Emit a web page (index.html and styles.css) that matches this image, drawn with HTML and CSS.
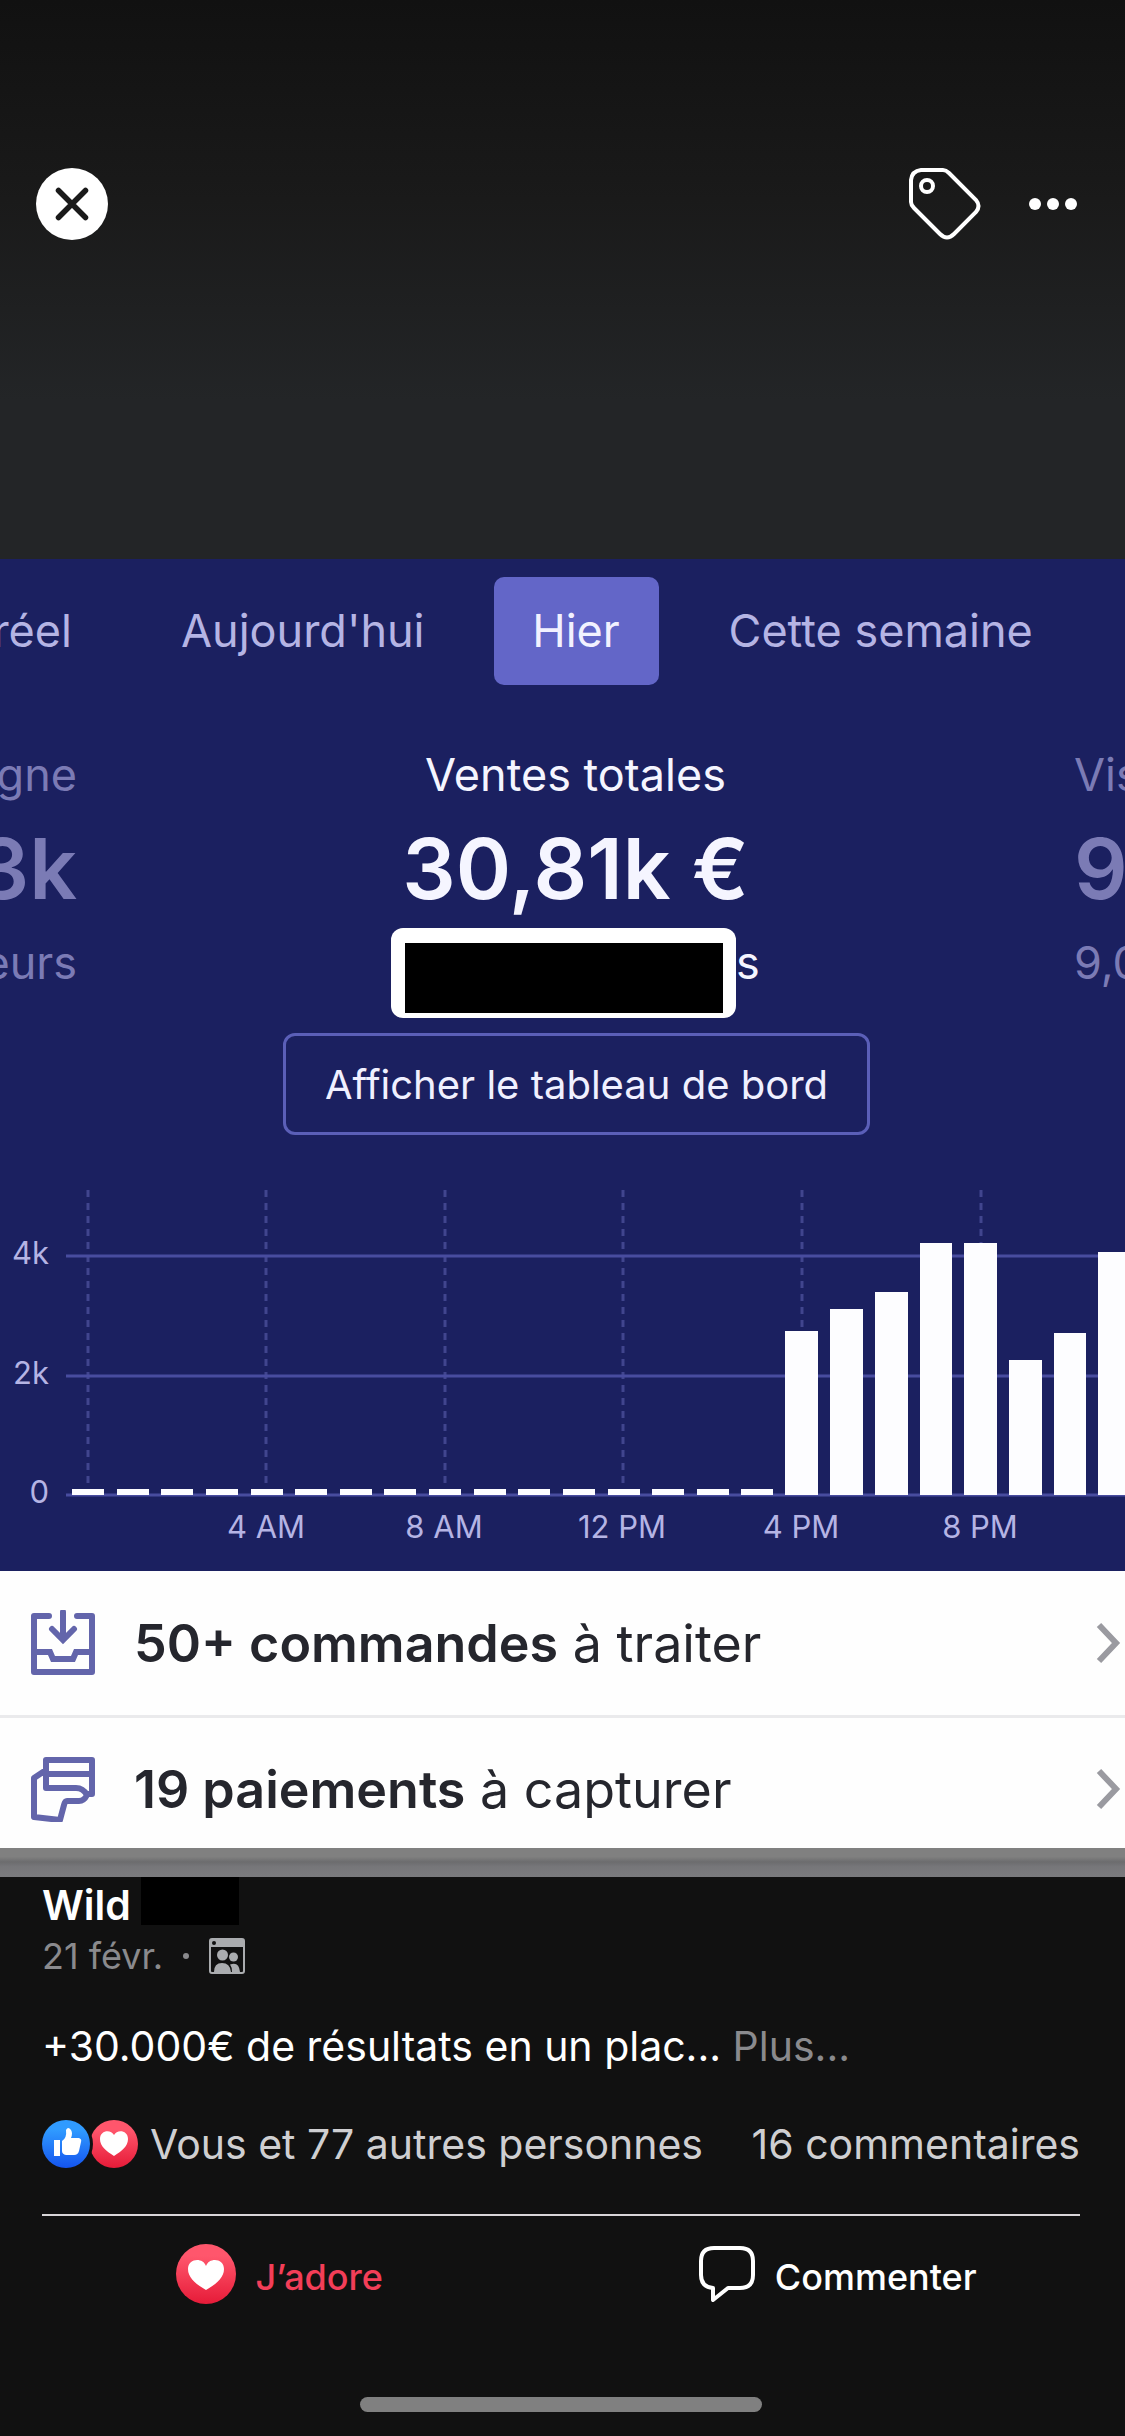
FILE: index.html
```html
<!DOCTYPE html>
<html lang="fr">
<head>
<meta charset="utf-8">
<meta name="viewport" content="width=device-width, initial-scale=1">
<title>Photo</title>
<link rel="stylesheet" href="styles.css">
</head>
<body>
<div class="viewer">
  <header class="topbar">
    <button class="icon-btn" type="button" aria-label="Fermer">
      <svg width="72" height="72" viewBox="0 0 72 72"><circle cx="36" cy="36" r="36" fill="#fff"/><path d="M22.500 22.500 49.500 49.500M49.500 22.500 22.500 49.500" stroke="#1a1a1a" stroke-width="5.500" stroke-linecap="round"/></svg>
    </button>
    <div class="tools">
      <button class="icon-btn" type="button" aria-label="Identifier">
        <svg width="72" height="72" viewBox="0 0 72 72" fill="none" stroke="#fff" stroke-width="4"><path d="M12 2H34Q37 2 40 5L67 32Q72 38 67 44L45 66Q38 73 31 66L5 40Q2 37 2 34V12Q3 3 12 2Z"/><circle cx="18" cy="18" r="6"/></svg>
      </button>
      <button class="icon-btn" type="button" aria-label="Plus d’options">
        <svg width="48" height="72" viewBox="0 0 48 72" fill="#fff"><circle cx="6" cy="36" r="6"/><circle cx="24" cy="36" r="6"/><circle cx="42" cy="36" r="6"/></svg>
      </button>
    </div>
  </header>

  <main class="photo">
    <section class="dashboard">
      <nav class="tabs">
        <button class="tab tab-first" type="button">réel</button>
        <button class="tab tab-today" type="button">Aujourd'hui</button>
        <button class="tab tab-active" type="button">Hier</button>
        <button class="tab tab-week" type="button">Cette semaine</button>
      </nav>
      <div class="metrics">
        <div class="metric metric-prev"><p>gne</p><strong>3k</strong><p>eurs</p></div>
        <div class="metric metric-main">
          <p>Ventes totales</p><strong>30,81k €</strong>
          <p class="hidden-line"><span class="mask"><span class="mask-ink"></span></span>s</p>
        </div>
        <div class="metric metric-next"><p>Vis</p><strong>9</strong><p>9,0</p></div>
      </div>
      <button class="board-btn" type="button">Afficher le tableau de bord</button>
      <svg class="chart" width="100%" height="381" role="img" aria-label="Ventes par heure">
        <g class="guides"><path d="M88 0V302M266 0V302M445 0V302M623 0V302M802 0V302M981 0V302"/></g>
        <g class="grid"><path d="M66 66H4000M66 186H4000M66 305H4000"/></g>
        <g class="bars">
          <path d="M72 299h32v6h-32zM117 299h32v6h-32zM161 299h32v6h-32zM206 299h32v6h-32zM251 299h32v6h-32zM295 299h32v6h-32zM340 299h32v6h-32zM384 299h32v6h-32zM429 299h32v6h-32zM474 299h32v6h-32zM518 299h32v6h-32zM563 299h32v6h-32zM608 299h32v6h-32zM652 299h32v6h-32zM697 299h32v6h-32zM741 299h32v6h-32z"/>
          <path d="M785 141h33v164h-33zM830 119h33v186h-33zM875 102h33v203h-33zM920 53h32v252h-32zM964 53h33v252h-33zM1009 170h33v135h-33zM1054 143h32v162h-32zM1098 62h33v243h-33z"/>
        </g>
        <g class="axis" text-anchor="end"><text x="49" y="74">4k</text><text x="49" y="194">2k</text><text x="49" y="313">0</text></g>
        <g class="axis" text-anchor="middle"><text x="266" y="348">4 AM</text><text x="444" y="348">8 AM</text><text x="622" y="348">12 PM</text><text x="801" y="348">4 PM</text><text x="980" y="348">8 PM</text></g>
      </svg>
    </section>

    <a class="task" href="#commandes">
      <svg width="66" height="66" viewBox="0 0 66 66" fill="none" stroke="#6365ab" stroke-width="6"><path d="M19 6H4V62H62V6H47" stroke-linejoin="round" stroke-linecap="round"/><path d="M4 42H20L23 49H43L46 42H62"/><path d="M33 2V29M22 19 33 30 44 19" stroke-linecap="round"/></svg>
      <span><b>50+ commandes</b> à traiter</span>
      <svg class="chevron" width="26" height="44" viewBox="0 0 26 44"><path d="M4 4 21 22 4 40"/></svg>
    </a>
    <a class="task" href="#paiements">
      <svg width="66" height="66" viewBox="0 0 66 66" fill="none" stroke="#6365ab" stroke-width="6" stroke-linejoin="round"><path d="M55 38H62V4H16V32H46Q53 32 57 39Q54 45 49 45H37Q35 45 34 49L30 64 4 61V22L16 14"/><path d="M16 18H62"/></svg>
      <span><b>19 paiements</b> à capturer</span>
      <svg class="chevron" width="26" height="44" viewBox="0 0 26 44"><path d="M4 4 21 22 4 40"/></svg>
    </a>
    <div class="photo-edge"></div>
  </main>

  <footer class="post">
    <h1 class="author">Wild <span class="author-mask"></span></h1>
    <p class="meta"><span>21 févr.</span><span class="dot"></span>
      <svg width="36" height="36" viewBox="0 0 36 36"><rect x="1" y="1" width="34" height="34" rx="2" fill="none" stroke="#aaacaf" stroke-width="2"/><path d="M1 1h34v8H1z" fill="#aaacaf"/><circle cx="5" cy="5" r="2" fill="#111"/><g fill="#aaacaf"><circle cx="13.500" cy="17" r="5.500"/><circle cx="24.500" cy="19" r="4.500"/><path d="M5 34Q5 25 13 25Q21 25 22 34ZM23 34Q23 29 21 26.500Q30 23 31 34Z"/></g></svg>
    </p>
    <p class="caption">+30.000€ de résultats en un plac... <a href="#plus">Plus...</a></p>
    <div class="stats">
      <svg width="96" height="48" viewBox="0 0 96 48">
        <defs>
          <linearGradient id="blue" x2="0" y2="1"><stop offset=".2" stop-color="#309bff"/><stop offset="1" stop-color="#1454ee"/></linearGradient>
          <linearGradient id="red" x2="0" y2="1"><stop offset=".2" stop-color="#ff566c"/><stop offset="1" stop-color="#e61b38"/></linearGradient>
        </defs>
        <circle cx="72" cy="24" r="24" fill="url(#red)"/>
        <path d="M72 36C64 31 58 26 58 19C58 10 69 9 72 15C75 9 86 10 86 19C86 26 80 31 72 36Z" fill="#fff"/>
        <circle cx="24" cy="24" r="27" fill="#111"/><circle cx="24" cy="24" r="24" fill="url(#blue)"/>
        <path d="M12 20h6v16h-6zM20 21Q25 18 24 10Q26 6 29 10Q31 13 29 18H37Q40 19 39 22L37 31Q36 35 32 35H24Q20 34 20 31Z" fill="#fff"/>
      </svg>
      <span class="likes">Vous et 77 autres personnes</span>
      <a class="comments" href="#commentaires">16 commentaires</a>
    </div>
    <hr class="rule">
    <div class="actions">
      <button class="action action-love" type="button">
        <svg width="60" height="60" viewBox="0 0 60 60"><circle cx="30" cy="30" r="30" fill="url(#red)"/><path d="M30 46C20 40 12 34 12 25C12 14 27 13 30 22C33 13 48 14 48 25C48 34 40 40 30 46Z" fill="#fff"/></svg>
        <span>J’adore</span>
      </button>
      <button class="action action-comment" type="button">
        <svg width="56" height="56" viewBox="0 0 56 56" fill="none" stroke="#fff" stroke-width="4" stroke-linejoin="round"><path d="M15 2H41Q54 2 54 15V29Q54 42 41 42H29L14 54V42Q2 41 2 29V15Q2 2 15 2Z"/></svg>
        <span>Commenter</span>
      </button>
    </div>
    <div class="home-bar"></div>
  </footer>
</div>
</body>
</html>
```
FILE: styles.css
```css
* { box-sizing: border-box; }

body {
  margin: 0;
  background: #111;
  color: #fff;
  font-family: Inter, "Liberation Sans", sans-serif;
}

button {
  margin: 0;
  padding: 0;
  border: 0;
  background: none;
  color: inherit;
  font: inherit;
}

a { color: inherit; text-decoration: none; }
p, h1 { margin: 0; }
svg { display: block; flex: none; }

.viewer {
  min-height: 100vh;
  display: flex;
  flex-direction: column;
  overflow: hidden;
}

.topbar {
  height: 559px;
  padding: 168px 48px 0 36px;
  display: flex;
  align-items: flex-start;
  justify-content: space-between;
  background: linear-gradient(#111 0, #1a1a1a 200px, #232527 400px);
}
.tools { display: flex; gap: 48px; }

.dashboard {
  background: #1b2060;
  display: flex;
  flex-direction: column;
  align-items: center;
}

.tabs {
  align-self: stretch;
  height: 126px;
  padding-top: 18px;
  display: flex;
  color: #b5b4e4;
  font-size: 45px;
  line-height: 108px;
  white-space: nowrap;
}
.tab-first { width: 72px; display: flex; justify-content: flex-end; }
.tab-today { margin-left: 109px; }
.tab-active {
  width: 165px;
  margin-left: 69px;
  border-radius: 10px;
  background: #6366c8;
  color: #f2f1ff;
}
.tab-week { margin-left: 70px; }

.metrics {
  align-self: stretch;
  padding-top: 62px;
  display: grid;
  grid-template-columns: 77px 1fr 51px;
  white-space: nowrap;
}
.metric {
  display: flex;
  flex-direction: column;
  color: #7b7bb5;
  font-size: 45px;
  line-height: 56px;
}
.metric strong { font-size: 84px; font-weight: 600; line-height: 132px; }
.metric-prev { align-items: flex-end; }
.metric-main { align-items: center; color: #f5f5ff; }
.hidden-line { display: flex; height: 90px; }
.mask {
  width: 345px;
  height: 90px;
  margin-top: -7px;
  padding: 15px 13px 5px 14px;
  border-radius: 12px;
  background: #fff;
}
.mask-ink { display: block; height: 100%; background: #000; }

.board-btn {
  width: 587px;
  height: 102px;
  margin: 8px 0 55px 28px;
  border: 3px solid #5b5fb8;
  border-radius: 12px;
  color: #f0f0ff;
  font-size: 40px;
}

.chart { height: 381px; }
.guides { stroke: #41458e; stroke-width: 3; stroke-dasharray: 7 6; }
.grid { stroke: #484c9f; stroke-width: 3; }
.bars { fill: #fdfdff; }
.axis { fill: #b5b4e4; font-size: 31px; }

.task {
  height: 144px;
  padding: 0 4px 0 30px;
  display: flex;
  align-items: center;
  gap: 38px;
  background: #fefefe;
  color: #25262d;
  font-size: 52px;
  white-space: nowrap;
}
.task + .task { height: 133px; padding-top: 12px; border-top: 3px solid #eaeaec; }
.task b { font-weight: 600; }
.chevron { margin-left: auto; fill: none; stroke: #9a9aa0; stroke-width: 6; }

.photo-edge {
  height: 29px;
  background: linear-gradient(#808080 30%, #6c6c6e 48%, #77777a 65%, #7b7b7e);
}

.post {
  padding: 0 45px 0 42px;
  flex: 1;
  display: flex;
  flex-direction: column;
}
.author {
  height: 56px;
  display: flex;
  gap: 10px;
  font-size: 41px;
  font-weight: 600;
  line-height: 56px;
}
.author-mask { width: 98px; height: 48px; background: #000; }
.meta {
  height: 46px;
  display: flex;
  align-items: center;
  gap: 20px;
  color: #8a8a8d;
  font-size: 36px;
}
.dot { width: 6px; height: 6px; border-radius: 50%; background: #8a8a8d; }
.caption { padding-top: 39px; font-size: 41px; line-height: 56px; white-space: nowrap; }
.caption a { color: #8a8a8d; }
.stats {
  height: 140px;
  display: flex;
  align-items: center;
  color: #cfcfd1;
  font-size: 41px;
  white-space: nowrap;
}
.likes { margin-left: 12px; }
.comments { margin-left: auto; }
.rule {
  align-self: stretch;
  height: 2px;
  margin: 0;
  border: 0;
  background: #d8d5d8;
}
.actions {
  margin: 28px -37px 0 -42px;
  display: grid;
  grid-template-columns: 1fr 1fr;
  font-size: 36px;
  font-weight: 500;
}
.action { display: flex; align-items: center; justify-content: center; gap: 20px; height: 60px; }
.action span { padding-top: 6px; }
.action-love { color: #f33e58; }
.home-bar {
  width: 402px;
  height: 15px;
  margin: auto auto 24px;
  border-radius: 8px;
  background: #808080;
}
```
